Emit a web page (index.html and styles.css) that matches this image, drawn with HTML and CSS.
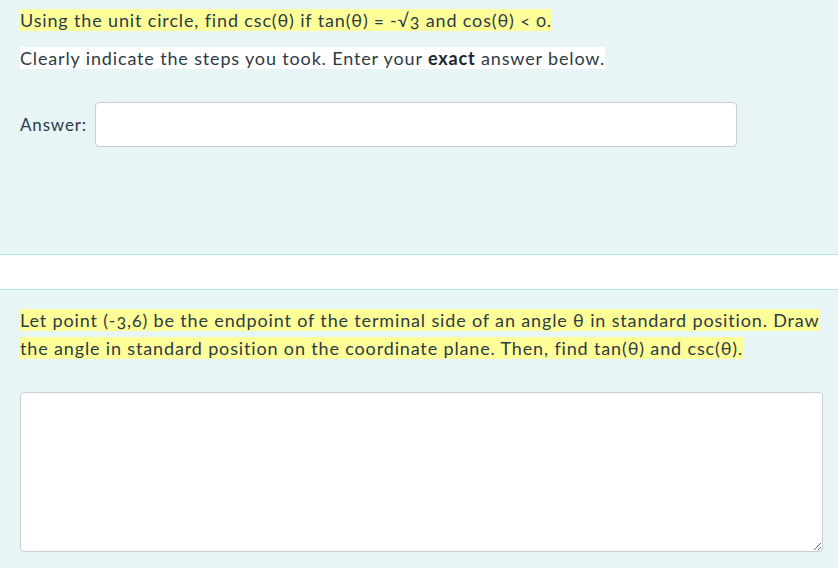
FILE: index.html
```html
<!DOCTYPE html>
<html>
<head>
<meta charset="utf-8">
<link rel="stylesheet" href="styles.css">
</head>
<body>
<div class="question q1">
  <p class="line"><span class="hl">Using the unit circle, find csc(θ) if tan(θ) = -√3 and cos(θ) &lt; 0.</span></p>
  <p class="line"><span class="wh">Clearly indicate the steps you took. Enter your <strong>exact</strong> answer below.</span></p>
  <div class="answer-row">
    <label class="answer-label">Answer:</label>
    <input class="answer-input" type="text">
  </div>
</div>
<div class="divider"></div>
<div class="question q2">
  <p class="line"><span class="hl">Let point (-3,6) be the endpoint of the terminal side of an angle θ in standard position. Draw the angle in standard position on the coordinate plane. Then, find tan(θ) and csc(θ).</span></p>
  <textarea class="essay"></textarea>
</div>
</body>
</html>
```
FILE: styles.css
```css
html, body {
  margin: 0;
  padding: 0;
}
body {
  background: #e7f5f7;
  font-family: Lato, "Open Sans", sans-serif;
  font-size: 18px;
  letter-spacing: 0.85px;
  color: #2d3b45;
  font-variant-numeric: oldstyle-nums;
  width: 838px;
  height: 568px;
  overflow: hidden;
}
.question {
  padding: 0 15px 0 20px;
}
.q1 {
  height: 254px;
  box-sizing: border-box;
  padding-top: 6px;
}
.line {
  margin: 0 0 10px 0;
  line-height: 28px;
}
.hl {
  background: #ffff99;
}
.wh {
  background: #ffffff;
}
strong {
  font-weight: 700;
  color: #1c2630;
}
.answer-row {
  display: flex;
  align-items: center;
  gap: 8px;
  margin-top: 30px;
}
.answer-label {
  font-size: 17px;
}
.answer-input {
  width: 642px;
  height: 45px;
  box-sizing: border-box;
  border: 1px solid #c7cdd1;
  border-radius: 4px;
  background: #fff;
  margin: 0;
}
.divider {
  height: 34px;
  background: #fff;
  border-top: 1px solid #b7e3ea;
  border-bottom: 1px solid #b7e3ea;
}
.q2 {
  padding-top: 16px;
  display: flex;
  flex-direction: column;
}
.q2 .line {
  margin: 0;
}
.essay {
  margin-top: 30px;
  width: 803px;
  height: 160px;
  box-sizing: border-box;
  border: 1px solid #c7cdd1;
  border-radius: 4px;
  background: #fff;
  resize: vertical;
}
```
